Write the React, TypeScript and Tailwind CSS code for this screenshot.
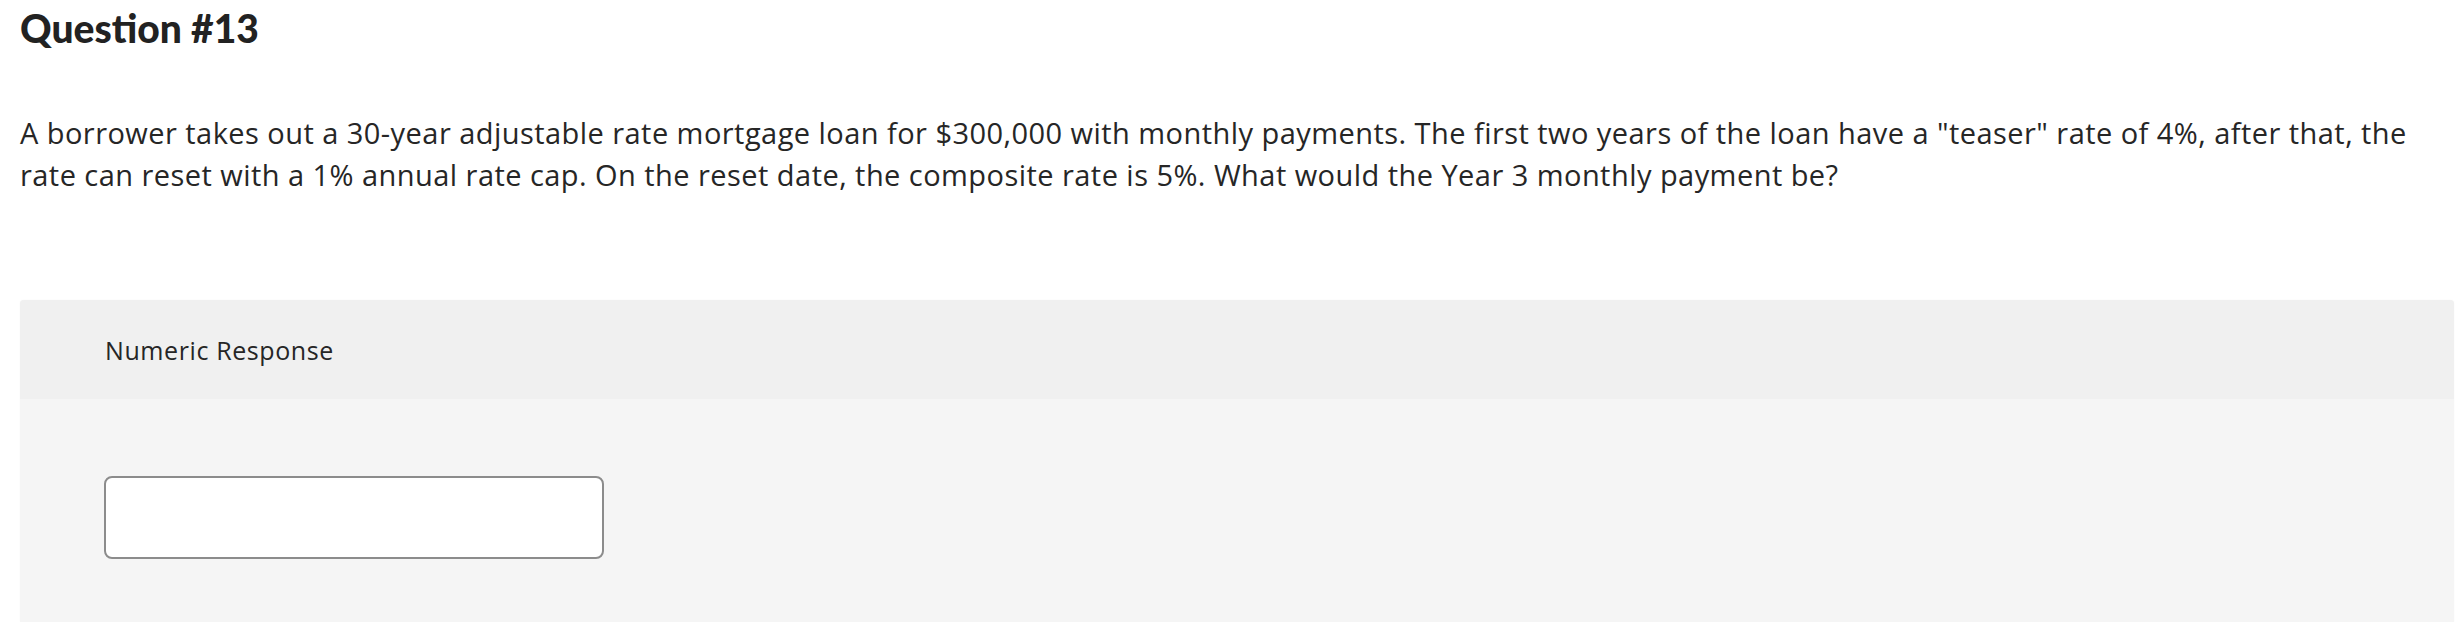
export default function App() {
  return (
    <div className="min-h-[622px] bg-white font-['Open_Sans','Liberation_Sans',sans-serif] text-[#262626]">
      <div className="px-[20px] pt-[4px]">
        <h1 className="font-['Lato','Liberation_Sans',sans-serif] text-[39px] leading-[48px] font-black text-[#222]">
          Question #13
        </h1>
        <p className="mt-[60px] text-[29px] leading-[42px] tracking-[0.45px]">
          A borrower takes out a 30-year adjustable rate mortgage loan for $300,000 with monthly payments. The first two
          years of the loan have a "teaser" rate of 4%, after that, the rate can reset with a 1% annual rate cap. On the
          reset date, the composite rate is 5%. What would the Year 3 monthly payment be?
        </p>
      </div>

      <section className="ml-[20px] mr-[2px] mt-[104px] rounded-t-[4px] bg-[#f5f5f5] shadow-[0_0_2px_rgba(0,0,0,0.04)]">
        <div className="flex h-[99px] items-center rounded-t-[4px] bg-[#f0f0f0] pl-[85px]">
          <span className="text-[25px] leading-[30px] tracking-[0.6px]">Numeric Response</span>
        </div>
        <div className="pl-[84px] pt-[77px] pb-[63px]">
          <input
            type="text"
            aria-label="Numeric Response"
            className="block h-[83px] w-[500px] rounded-[8px] border-2 border-[#8c8c8c] bg-white px-3 text-[24px] outline-none"
          />
        </div>
      </section>
    </div>
  );
}
